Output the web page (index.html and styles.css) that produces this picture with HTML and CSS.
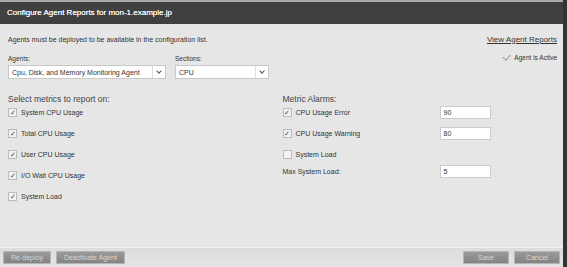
FILE: index.html
```html
<!DOCTYPE html>
<html lang="en">
<head>
    <meta charset="UTF-8">
    <title>Configure Agent Reports</title>
    <link rel="stylesheet" href="styles.css">
</head>
<body>
    <div class="window">
        <header class="titlebar">Configure Agent Reports for mon-1.example.jp</header>

        <main class="content">
            <div class="toprow">
                <p class="note">Agents must be deployed to be available in the configuration list.</p>
                <a class="reports" href="#">View Agent Reports</a>
            </div>

            <div class="selrow">
                <div class="field">
                    <label>Agents:</label>
                    <div class="select agents"><span>Cpu, Disk, and Memory Monitoring Agent</span><i class="arrow"></i></div>
                </div>
                <div class="field">
                    <label>Sections:</label>
                    <div class="select sections"><span>CPU</span><i class="arrow"></i></div>
                </div>
                <div class="active"><span class="tick"></span>Agent is Active</div>
            </div>

            <div class="cols">
                <div class="col">
                    <h2>Select metrics to report on:</h2>
                    <div class="check on">System CPU Usage</div>
                    <div class="check on">Total CPU Usage</div>
                    <div class="check on">User CPU Usage</div>
                    <div class="check on">I/O Wait CPU Usage</div>
                    <div class="check on">System Load</div>
                </div>
                <div class="col right">
                    <h2>Metric Alarms:</h2>
                    <div class="alarm"><div class="check on">CPU Usage Error</div><div class="input">90</div></div>
                    <div class="alarm"><div class="check on">CPU Usage Warning</div><div class="input">80</div></div>
                    <div class="alarm"><div class="check">System Load</div></div>
                    <div class="alarm plain"><div class="lbl">Max System Load:</div><div class="input">5</div></div>
                </div>
            </div>
        </main>

        <footer class="footer">
            <div class="btns">
                <button>Re-deploy</button>
                <button>Deactivate Agent</button>
            </div>
            <div class="btns">
                <button class="wide">Save</button>
                <button class="wide">Cancel</button>
            </div>
        </footer>
    </div>
</body>
</html>
```

FILE: styles.css
```css
body {
    margin: 0;
    background: #e6e6e6;
    font-family: "Liberation Sans", Arial, sans-serif;
    font-size: 7px;
    color: #333;
}

.window {
    height: 267px;
    display: flex;
    flex-direction: column;
    border-right: 4px solid #333;
    box-sizing: border-box;
    background: #e6e6e6;
}

.titlebar {
    height: 22px;
    border-top: 2px solid #a8a8a8;
    background: #404040;
    color: #f4f4f4;
    font-size: 8px;
    line-height: 21px;
    padding-left: 7px;
    text-shadow: 0 0 0.4px #fff;
}

.content {
    flex: 1;
    padding: 0 6px 0 8px;
}

.toprow {
    display: flex;
    justify-content: space-between;
    align-items: center;
    margin-top: 10px;
    height: 10px;
}

.note {
    margin: 0;
}

.reports {
    color: #333;
    font-size: 8px;
    text-decoration: underline;
}

.selrow {
    display: flex;
    align-items: flex-start;
    gap: 9px;
    margin-top: 11px;
}

.field label {
    display: block;
    height: 10px;
    font-size: 6.5px;
}

.select {
    display: flex;
    justify-content: space-between;
    align-items: center;
    height: 14px;
    background: #fff;
    border: 1px solid #c8c8c8;
    box-sizing: border-box;
    padding-left: 3px;
}

.agents { width: 158px; }
.sections { width: 94px; }

.arrow {
    width: 12px;
    height: 12px;
    border-left: 1px solid #ddd;
    position: relative;
}

.arrow::after {
    content: "";
    position: absolute;
    left: 4px;
    top: 3px;
    width: 3px;
    height: 3px;
    border-right: 1.5px solid #555;
    border-bottom: 1.5px solid #555;
    transform: rotate(45deg);
}

.active {
    margin-left: auto;
    font-size: 6.5px;
    display: flex;
    align-items: center;
    gap: 3px;
    margin-top: -1px;
}

.tick {
    width: 4px;
    height: 6px;
    border-right: 1.5px solid #999;
    border-bottom: 1.5px solid #999;
    transform: rotate(40deg);
    margin-top: -3px;
    margin-right: 2px;
}

.cols {
    display: flex;
    margin-top: 15px;
}

.col {
    width: 275px;
}

.col h2 {
    font-size: 8.5px;
    font-weight: normal;
    color: #444;
    margin: 0 0 4px;
    height: 10px;
    line-height: 10px;
}

.check {
    display: flex;
    align-items: center;
    height: 21px;
}

.col > .check {
    height: 21px;
    margin-top: -6px;
    margin-bottom: 6px;
}

.check::before {
    content: "";
    width: 7px;
    height: 7px;
    border: 1px solid #bbb;
    background: #f2f2f2;
    margin-right: 4px;
    font-size: 7px;
    line-height: 7px;
    text-align: center;
    color: #444;
}

.check.on::before {
    content: "\2713";
}

.alarm {
    display: flex;
    align-items: center;
    height: 21px;
}

.alarm:first-of-type {
    margin-top: -6px;
}

.alarm .check {
    width: 157px;
}

.alarm.plain {
    height: 13px;
}

.lbl {
    width: 157px;
}

.input {
    width: 51px;
    height: 13px;
    box-sizing: border-box;
    background: #fff;
    border: 1px solid #ccc;
    padding-left: 3px;
    line-height: 11px;
}

.footer {
    height: 19px;
    border-top: 1px solid #f4f4f4;
    background: linear-gradient(#dcdcdc, #e4e4e4);
    display: flex;
    justify-content: space-between;
    align-items: center;
    padding: 0 3px;
}

.btns {
    display: flex;
    gap: 5px;
}

button {
    height: 13px;
    padding: 0 7px;
    border: 1px solid #b5b5b5;
    background: linear-gradient(#9a9a9a, #838383);
    color: #d8d8d8;
    font-family: "Liberation Sans", Arial, sans-serif;
    font-size: 7px;
}

.wide {
    width: 46px;
}
```
